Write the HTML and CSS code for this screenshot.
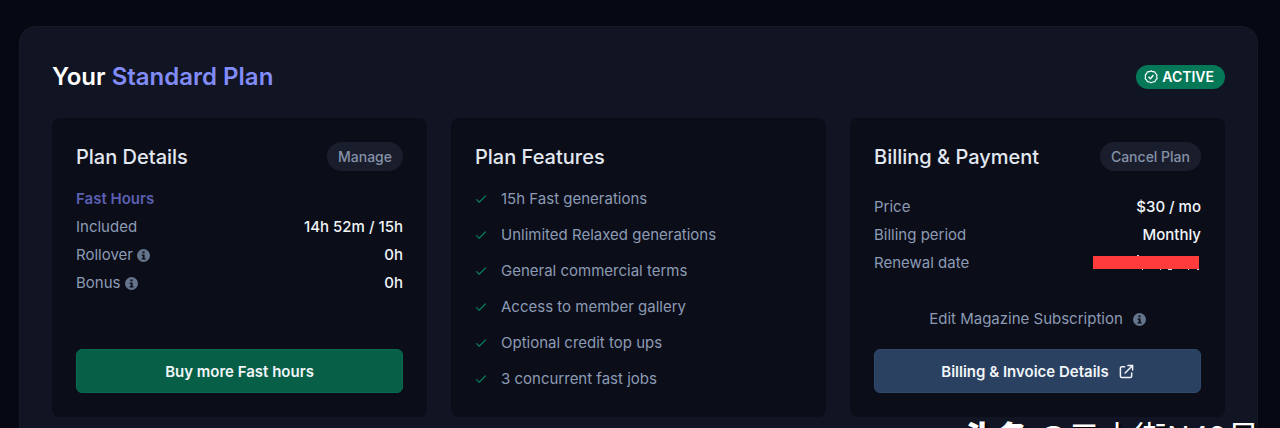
FILE: index.html
```html
<!DOCTYPE html>
<html lang="en">
<head>
    <meta charset="UTF-8">
    <meta name="viewport" content="width=device-width, initial-scale=1.0">
    <title>Your Standard Plan</title>
    <link rel="stylesheet" href="styles.css">
</head>
<body>
    <svg class="sprite" aria-hidden="true">
        <symbol id="info" viewBox="0 0 24 24">
            <path fill="currentColor" fill-rule="evenodd" d="M12 0a12 12 0 1 0 0 24a12 12 0 0 0 0-24zM10 4.500h4v3.500h-4zM8.500 10H14v7h2v2.500H8.500V17h2v-4.500h-2z"/>
        </symbol>
        <symbol id="check" viewBox="0 0 12 12">
            <path fill="none" stroke="currentColor" stroke-width="1.300" stroke-linecap="round" stroke-linejoin="round" d="M1.600 6.600L4.200 9.200L10.400 3"/>
        </symbol>
    </svg>

    <main class="panel">
        <div class="panel-header">
            <h1>Your <span>Standard Plan</span></h1>
            <div class="badge">
                <svg viewBox="0 0 24 24" fill="none" stroke="currentColor" stroke-width="2" stroke-linecap="round" stroke-linejoin="round">
                    <path d="M12 1.500l3 1.400 3.300.200 1.500 2.900 2.400 2.300-.4 3.300.7 3.200-2.400 2.300-1.600 2.900-3.300.500-3 1.500-3-1.500-3.300-.5-1.600-2.900L2 14.800l.6-3.300-.5-3.200L4.500 6 6 3.100 9.200 2.900z"/>
                    <path stroke-width="2.500" d="M8.500 12.500l2.500 2.500 4.500-5.500"/>
                </svg>
                ACTIVE
            </div>
        </div>

        <div class="cards">
            <section class="card">
                <div class="card-header">
                    <h2>Plan Details</h2>
                    <button class="pill">Manage</button>
                </div>
                <h3>Fast Hours</h3>
                <dl class="rows">
                    <div><dt>Included</dt><dd>14h 52m / 15h</dd></div>
                    <div><dt>Rollover <svg class="info"><use href="#info"/></svg></dt><dd>0h</dd></div>
                    <div><dt>Bonus <svg class="info"><use href="#info"/></svg></dt><dd>0h</dd></div>
                </dl>
                <div class="card-footer">
                    <button class="btn green">Buy more Fast hours</button>
                </div>
            </section>

            <section class="card">
                <div class="card-header">
                    <h2>Plan Features</h2>
                </div>
                <ul class="features">
                    <li><svg><use href="#check"/></svg>15h Fast generations</li>
                    <li><svg><use href="#check"/></svg>Unlimited Relaxed generations</li>
                    <li><svg><use href="#check"/></svg>General commercial terms</li>
                    <li><svg><use href="#check"/></svg>Access to member gallery</li>
                    <li><svg><use href="#check"/></svg>Optional credit top ups</li>
                    <li><svg><use href="#check"/></svg>3 concurrent fast jobs</li>
                </ul>
            </section>

            <section class="card">
                <div class="card-header">
                    <h2>Billing &amp; Payment</h2>
                    <button class="pill">Cancel Plan</button>
                </div>
                <dl class="rows billing">
                    <div><dt>Price</dt><dd>$30 / mo</dd></div>
                    <div><dt>Billing period</dt><dd>Monthly</dd></div>
                    <div>
                        <dt>Renewal date</dt>
                        <dd>
                            <svg class="redacted" viewBox="0 0 108 16">
                                <path fill="#d8dce4" d="M44 0h2v2h-2zM49 14h1v1h-1zM67 14h1v1h-1zM75 14h4v1h-4zM95 14h1v1h-1zM104 14h2v1h-2z"/>
                                <path fill="#ff3b3b" d="M0 1h106v13H0z"/>
                            </svg>
                        </dd>
                    </div>
                </dl>
                <div class="card-footer">
                    <a class="magazine" href="#">Edit Magazine Subscription <svg class="info"><use href="#info"/></svg></a>
                    <button class="btn blue">
                        Billing &amp; Invoice Details
                        <svg viewBox="0 0 16 16" fill="none" stroke="currentColor" stroke-width="1.600" stroke-linecap="round" stroke-linejoin="round">
                            <path d="M6 3H3a1.500 1.500 0 0 0-1.500 1.500v8.500A1.500 1.500 0 0 0 3 14.500h9a1.500 1.500 0 0 0 1.500-1.500V9.500M9.500 1.500h5v5M14.500 1.500L6.500 9.500"/>
                        </svg>
                    </button>
                </div>
            </section>
        </div>
    </main>

    <div class="watermark"><b>头条</b> @云水街N49号</div>
</body>
</html>
```
FILE: styles.css
```css
* {
    box-sizing: border-box;
}

body {
    margin: 0;
    padding: 26px 22px 0 19px;
    height: 100vh;
    overflow: hidden;
    position: relative;
    background-color: #060813;
    color: #8b9bb4;
    font-family: Inter, "Noto Sans CJK SC", sans-serif;
    font-size: 15px;
    line-height: 28px;
}

h1, h2, h3, dl, dd, ul {
    margin: 0;
    padding: 0;
}

button {
    border: none;
    font-family: inherit;
    cursor: pointer;
}

.sprite {
    display: none;
}

.panel {
    padding: 32px;
    border: 1px solid #161a27;
    border-radius: 16px;
    background-color: #111422;
}

.panel-header {
    display: flex;
    justify-content: space-between;
    align-items: center;
    margin-bottom: 23px;
}

h1 {
    color: #fff;
    font-size: 24px;
    font-weight: 600;
    line-height: 36px;
}

h1 span {
    color: #818cf8;
}

.badge {
    display: flex;
    align-items: center;
    gap: 4px;
    padding: 0 11px 0 8px;
    border-radius: 12px;
    background-color: #047857;
    color: #fff;
    font-size: 14px;
    font-weight: 600;
    line-height: 24px;
}

.badge svg {
    width: 14px;
    height: 14px;
}

.cards {
    display: grid;
    grid-template-columns: repeat(3, 1fr);
    gap: 24px;
}

.card {
    display: flex;
    flex-direction: column;
    padding: 24px;
    border-radius: 8px;
    background-color: #0b0d19;
}

.card-header {
    display: flex;
    justify-content: space-between;
    align-items: center;
    height: 29px;
    margin-bottom: 14px;
}

h2 {
    color: #e2e8f0;
    font-size: 20px;
    font-weight: 500;
}

h3 {
    color: #5b5fb0;
    font-size: 15px;
    font-weight: 600;
}

.pill {
    padding: 0 11px;
    border-radius: 15px;
    background-color: #1a1d2b;
    color: #8492a8;
    font-size: 14px;
    font-weight: 500;
    line-height: 29px;
}

.rows div {
    display: flex;
    justify-content: space-between;
}

.rows dd {
    color: #f1f5f9;
    font-weight: 500;
}

.billing {
    padding-top: 8px;
}

.info {
    width: 13px;
    height: 13px;
    color: #64748b;
    vertical-align: -2px;
}

.redacted {
    display: block;
    width: 108px;
    height: 16px;
    margin-top: 6px;
}

.features {
    display: grid;
    gap: 8px;
    list-style: none;
}

.features li {
    display: flex;
    align-items: center;
    gap: 14px;
}

.features svg {
    width: 12px;
    height: 12px;
    color: #047857;
}

.card-footer {
    display: flex;
    flex-direction: column;
    gap: 16px;
    margin-top: auto;
}

.magazine {
    display: flex;
    justify-content: center;
    align-items: center;
    gap: 10px;
    color: inherit;
    text-decoration: none;
}

.btn {
    display: flex;
    justify-content: center;
    align-items: center;
    gap: 10px;
    height: 44px;
    border-radius: 6px;
    color: #f1f5f9;
    font-size: 15px;
    font-weight: 600;
}

.btn svg {
    width: 15px;
    height: 15px;
}

.green {
    background-color: #065f46;
    border: 1px solid #066b4e;
}

.blue {
    background-color: #2a4161;
    border: 1px solid #2f496c;
}

/* runs off the bottom edge */
.watermark {
    position: absolute;
    right: 20px;
    bottom: -26px;
    color: #fff;
    font-family: "Noto Sans CJK SC", sans-serif;
    font-size: 33px;
    line-height: 36px;
    white-space: nowrap;
    text-shadow: 2px 2px 2px #000;
}

.watermark b {
    font-weight: 900;
}
```
